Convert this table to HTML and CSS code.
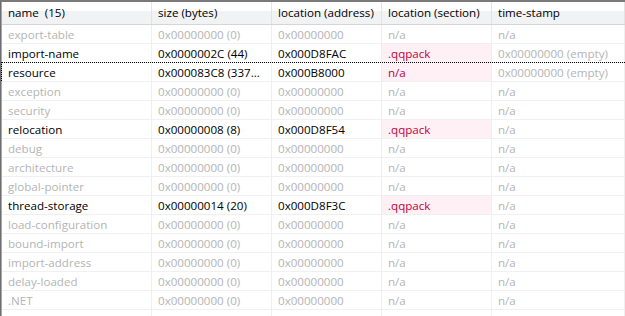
FILE: index.html
```html
<!DOCTYPE html>
<html>
<head>
<meta charset="utf-8">
<link rel="stylesheet" href="styles.css">
</head>
<body>
<div class="grid">
  <div class="row head">
    <div class="c">name&nbsp;&nbsp;(15)</div>
    <div class="c">size (bytes)</div>
    <div class="c">location (address)</div>
    <div class="c">location (section)</div>
    <div class="c">time-stamp</div>
  </div>
  <div class="row dim"><div class="c">export-table</div><div class="c">0x00000000 (0)</div><div class="c">0x00000000</div><div class="c">n/a</div><div class="c">n/a</div></div>
  <div class="row on"><div class="c">import-name</div><div class="c">0x0000002C (44)</div><div class="c">0x000D8FAC</div><div class="c sec">.qqpack</div><div class="c ts">0x00000000 (empty)</div></div>
  <div class="row on focus"><div class="c">resource</div><div class="c">0x000083C8 (337…</div><div class="c">0x000B8000</div><div class="c sec">n/a</div><div class="c ts">0x00000000 (empty)</div></div>
  <div class="row dim"><div class="c">exception</div><div class="c">0x00000000 (0)</div><div class="c">0x00000000</div><div class="c">n/a</div><div class="c">n/a</div></div>
  <div class="row dim"><div class="c">security</div><div class="c">0x00000000 (0)</div><div class="c">0x00000000</div><div class="c">n/a</div><div class="c">n/a</div></div>
  <div class="row on"><div class="c">relocation</div><div class="c">0x00000008 (8)</div><div class="c">0x000D8F54</div><div class="c sec">.qqpack</div><div class="c ts">n/a</div></div>
  <div class="row dim"><div class="c">debug</div><div class="c">0x00000000 (0)</div><div class="c">0x00000000</div><div class="c">n/a</div><div class="c">n/a</div></div>
  <div class="row dim"><div class="c">architecture</div><div class="c">0x00000000 (0)</div><div class="c">0x00000000</div><div class="c">n/a</div><div class="c">n/a</div></div>
  <div class="row dim"><div class="c">global-pointer</div><div class="c">0x00000000 (0)</div><div class="c">0x00000000</div><div class="c">n/a</div><div class="c">n/a</div></div>
  <div class="row on"><div class="c">thread-storage</div><div class="c">0x00000014 (20)</div><div class="c">0x000D8F3C</div><div class="c sec">.qqpack</div><div class="c ts">n/a</div></div>
  <div class="row dim"><div class="c">load-configuration</div><div class="c">0x00000000 (0)</div><div class="c">0x00000000</div><div class="c">n/a</div><div class="c">n/a</div></div>
  <div class="row dim"><div class="c">bound-import</div><div class="c">0x00000000 (0)</div><div class="c">0x00000000</div><div class="c">n/a</div><div class="c">n/a</div></div>
  <div class="row dim"><div class="c">import-address</div><div class="c">0x00000000 (0)</div><div class="c">0x00000000</div><div class="c">n/a</div><div class="c">n/a</div></div>
  <div class="row dim"><div class="c">delay-loaded</div><div class="c">0x00000000 (0)</div><div class="c">0x00000000</div><div class="c">n/a</div><div class="c">n/a</div></div>
  <div class="row dim"><div class="c">.NET</div><div class="c">0x00000000 (0)</div><div class="c">0x00000000</div><div class="c">n/a</div><div class="c">n/a</div></div>
  <div class="row filler"><div class="c"></div><div class="c"></div><div class="c"></div><div class="c"></div><div class="c"></div></div>
</div>
</body>
</html>
```
FILE: styles.css
```css
html, body {
  margin: 0;
  padding: 0;
  background: #fff;
  overflow: hidden;
}
body {
  width: 625px;
  height: 316px;
  font-family: "Open Sans", "Noto Sans", sans-serif;
  font-size: 11.6px;
}
.grid {
  height: 314px;
  border-top: 2px solid #7a7a7a;
  border-left: 1px solid #6e6e6e;
  box-shadow: inset 1px 0 0 #a8a8a8;
  padding-left: 1px;
  overflow: hidden;
}
.row {
  display: grid;
  grid-template-columns: 150px 120px 110px 110px 1fr;
  grid-template-rows: 18px;
  height: 18px;
  border-bottom: 1px solid #f0f0f0;
}
.row.head {
  height: 22px;
  grid-template-rows: 22px;
  border-bottom: 1px solid #d5d5d5;
  background: linear-gradient(#ffffff 0, #ffffff 9px, #f1f2f4 9px, #f1f2f4 100%);
  color: #000;
}
.c {
  padding-left: 6px;
  padding-top: 1px;
  border-right: 1px solid #efefef;
  white-space: nowrap;
  overflow: hidden;
  line-height: 18px;
}
.head .c {
  padding-top: 0;
  line-height: 22px;
  border-right: 1px solid #e3e3e3;
}
.dim {
  color: #b4b4b4;
}
.on {
  color: #000;
}
.sec {
  background: #fff0f6;
  color: #c2003a;
}
.ts {
  color: #b4b4b4;
}
.focus {
  position: relative;
}
.focus::before {
  content: "";
  position: absolute;
  left: -1px;
  right: 0;
  top: -1px;
  bottom: 0;
  border-top: 1px dotted #000;
  border-left: 1px dotted #000;
  pointer-events: none;
}
.filler {
  height: 10px;
  grid-template-rows: 10px;
  border-bottom: none;
}
```
